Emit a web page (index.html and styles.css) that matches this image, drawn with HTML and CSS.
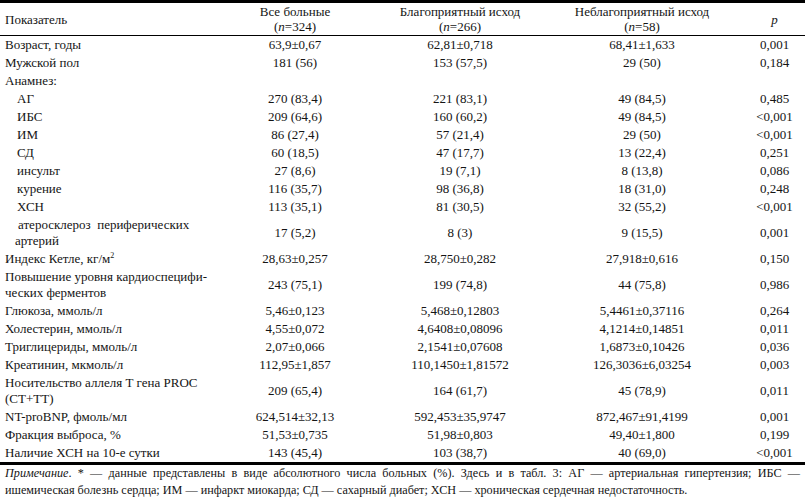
FILE: index.html
```html
<!DOCTYPE html>
<html lang="ru">
<head>
<meta charset="utf-8">
<title>Таблица</title>
<link rel="stylesheet" href="styles.css">
</head>
<body>
<table class="data">
  <colgroup>
    <col class="c1"><col class="c2"><col class="c3"><col class="c4"><col class="c5">
  </colgroup>
  <thead>
    <tr>
      <th class="lbl">Показатель</th>
      <th>Все больные<br>(<i>n</i>=324)</th>
      <th>Благоприятный исход<br>(<i>n</i>=266)</th>
      <th>Неблагоприятный исход<br>(<i>n</i>=58)</th>
      <th><i>p</i></th>
    </tr>
  </thead>
  <tbody>
    <tr><td class="lbl">Возраст, годы</td><td>63,9±0,67</td><td>62,81±0,718</td><td>68,41±1,633</td><td>0,001</td></tr>
    <tr><td class="lbl">Мужской пол</td><td>181 (56)</td><td>153 (57,5)</td><td>29 (50)</td><td>0,184</td></tr>
    <tr><td class="lbl">Анамнез:</td><td></td><td></td><td></td><td></td></tr>
    <tr><td class="lbl sub">АГ</td><td>270 (83,4)</td><td>221 (83,1)</td><td>49 (84,5)</td><td>0,485</td></tr>
    <tr><td class="lbl sub">ИБС</td><td>209 (64,6)</td><td>160 (60,2)</td><td>49 (84,5)</td><td>&lt;0,001</td></tr>
    <tr><td class="lbl sub">ИМ</td><td>86 (27,4)</td><td>57 (21,4)</td><td>29 (50)</td><td>&lt;0,001</td></tr>
    <tr><td class="lbl sub">СД</td><td>60 (18,5)</td><td>47 (17,7)</td><td>13 (22,4)</td><td>0,251</td></tr>
    <tr><td class="lbl sub">инсульт</td><td>27 (8,6)</td><td>19 (7,1)</td><td>8 (13,8)</td><td>0,086</td></tr>
    <tr><td class="lbl sub">курение</td><td>116 (35,7)</td><td>98 (36,8)</td><td>18 (31,0)</td><td>0,248</td></tr>
    <tr><td class="lbl sub">ХСН</td><td>113 (35,1)</td><td>81 (30,5)</td><td>32 (55,2)</td><td>&lt;0,001</td></tr>
    <tr><td class="lbl sub2">атеросклероз&nbsp; периферических<br>артерий</td><td>17 (5,2)</td><td>8 (3)</td><td>9 (15,5)</td><td>0,001</td></tr>
    <tr><td class="lbl">Индекс Кетле, кг/м<sup>2</sup></td><td>28,63±0,257</td><td>28,750±0,282</td><td>27,918±0,616</td><td>0,150</td></tr>
    <tr><td class="lbl">Повышение уровня кардиоспецифи-<br>ческих ферментов</td><td>243 (75,1)</td><td>199 (74,8)</td><td>44 (75,8)</td><td>0,986</td></tr>
    <tr><td class="lbl">Глюкоза, ммоль/л</td><td>5,46±0,123</td><td>5,468±0,12803</td><td>5,4461±0,37116</td><td>0,264</td></tr>
    <tr><td class="lbl">Холестерин, ммоль/л</td><td>4,55±0,072</td><td>4,6408±0,08096</td><td>4,1214±0,14851</td><td>0,011</td></tr>
    <tr><td class="lbl">Триглицериды, ммоль/л</td><td>2,07±0,066</td><td>2,1541±0,07608</td><td>1,6873±0,10426</td><td>0,036</td></tr>
    <tr><td class="lbl">Креатинин, мкмоль/л</td><td>112,95±1,857</td><td>110,1450±1,81572</td><td>126,3036±6,03254</td><td>0,003</td></tr>
    <tr><td class="lbl">Носительство аллеля Т гена PROC<br>(CT+TT)</td><td>209 (65,4)</td><td>164 (61,7)</td><td>45 (78,9)</td><td>0,011</td></tr>
    <tr><td class="lbl">NT-proBNP, фмоль/мл</td><td>624,514±32,13</td><td>592,453±35,9747</td><td>872,467±91,4199</td><td>0,001</td></tr>
    <tr><td class="lbl">Фракция выброса, %</td><td>51,53±0,735</td><td>51,98±0,803</td><td>49,40±1,800</td><td>0,199</td></tr>
    <tr class="last"><td class="lbl">Наличие ХСН на 10-е сутки</td><td>143 (45,4)</td><td>103 (38,7)</td><td>40 (69,0)</td><td>&lt;0,001</td></tr>
  </tbody>
</table>
<div class="note">
  <p class="line1"><i>Примечание</i>. * — данные представлены в виде абсолютного числа больных (%). Здесь и в табл. 3: АГ — артериальная гипертензия; ИБС —</p>
  <p class="line2">ишемическая болезнь сердца; ИМ — инфаркт миокарда; СД — сахарный диабет; ХСН — хроническая сердечная недостаточность.</p>
</div>
</body>
</html>
```

FILE: styles.css
```css
html, body {
  margin: 0;
  padding: 0;
  background: #fff;
}

body {
  font-family: "Liberation Serif", "Times New Roman", serif;
  font-size: 13px;
  color: #141414;
  width: 805px;
}

.data {
  width: 805px;
  border-collapse: separate;
  border-spacing: 0;
  table-layout: fixed;
}

.c1 { width: 210px; }
.c2 { width: 170px; }
.c3 { width: 160px; }
.c4 { width: 204px; }
.c5 { width: 61px; }

.data th {
  font-weight: normal;
  line-height: 15px;
  padding: 1px 0;
  text-align: center;
  vertical-align: middle;
  border-top: 3px solid #000;
  border-bottom: 1px solid #000;
}

.data td {
  line-height: 16px;
  padding: 1px 0;
  text-align: center;
  vertical-align: middle;
  white-space: nowrap;
}

.data .last td {
  border-bottom: 3px solid #000;
}

.data .lbl {
  text-align: left;
  padding-left: 5px;
}

.data .sub {
  padding-left: 17px;
}

.data .sub2 {
  padding-left: 15px;
  text-indent: 3px;
}

sup {
  font-size: 8px;
  line-height: 0;
  vertical-align: 5px;
}

.note {
  padding: 0 5px;
  font-size: 12.2px;
}

.note p {
  margin: 0;
  line-height: 17px;
}

.note .line1 {
  text-align: justify;
  text-align-last: justify;
  white-space: nowrap;
}
```
